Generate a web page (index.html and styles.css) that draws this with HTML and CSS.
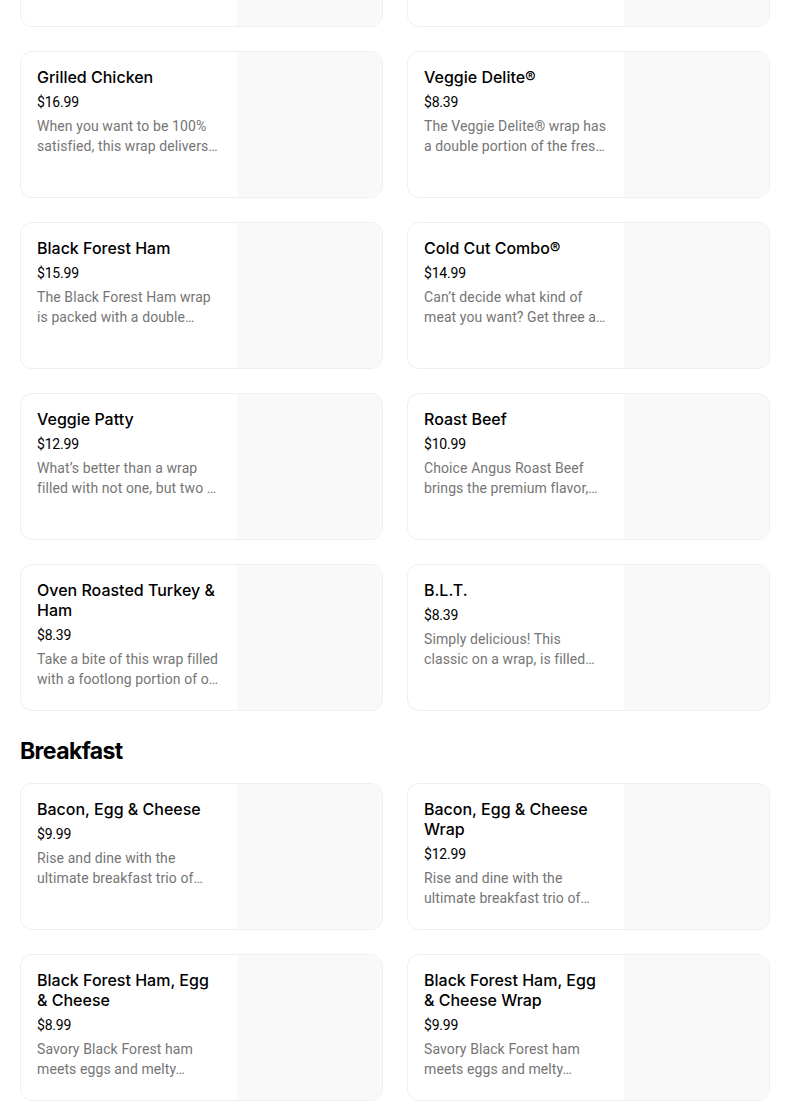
FILE: index.html
```html
<!DOCTYPE html>
<html lang="en">
<head>
<meta charset="utf-8">
<title>Menu</title>
<link rel="stylesheet" href="styles.css">
</head>
<body>
<main class="menu">
  <section class="section section-scrolled">
    <div class="grid">
      <div class="card"><div class="info"></div><div class="thumb"></div></div>
      <div class="card"><div class="info"></div><div class="thumb"></div></div>

      <div class="card">
        <div class="info">
          <h3 class="title">Grilled Chicken</h3>
          <div class="price">$16.99</div>
          <p class="desc"><span class="line">When you want to be 100%</span><span class="line cut">satisfied, this wrap delivers</span></p>
        </div>
        <div class="thumb"></div>
      </div>
      <div class="card">
        <div class="info">
          <h3 class="title">Veggie Delite®</h3>
          <div class="price">$8.39</div>
          <p class="desc"><span class="line">The Veggie Delite® wrap has</span><span class="line">a double portion of the freshest veggies.</span></p>
        </div>
        <div class="thumb"></div>
      </div>

      <div class="card">
        <div class="info">
          <h3 class="title">Black Forest Ham</h3>
          <div class="price">$15.99</div>
          <p class="desc"><span class="line">The Black Forest Ham wrap</span><span class="line cut">is packed with a double</span></p>
        </div>
        <div class="thumb"></div>
      </div>
      <div class="card">
        <div class="info">
          <h3 class="title">Cold Cut Combo®</h3>
          <div class="price">$14.99</div>
          <p class="desc"><span class="line">Can’t decide what kind of</span><span class="line">meat you want? Get three at once.</span></p>
        </div>
        <div class="thumb"></div>
      </div>

      <div class="card">
        <div class="info">
          <h3 class="title">Veggie Patty</h3>
          <div class="price">$12.99</div>
          <p class="desc"><span class="line">What’s better than a wrap</span><span class="line">filled with not one, but two veggie patties?</span></p>
        </div>
        <div class="thumb"></div>
      </div>
      <div class="card">
        <div class="info">
          <h3 class="title">Roast Beef</h3>
          <div class="price">$10.99</div>
          <p class="desc"><span class="line">Choice Angus Roast Beef</span><span class="line cut">brings the premium flavor,</span></p>
        </div>
        <div class="thumb"></div>
      </div>

      <div class="card">
        <div class="info">
          <h3 class="title">Oven Roasted Turkey &amp; Ham</h3>
          <div class="price">$8.39</div>
          <p class="desc"><span class="line">Take a bite of this wrap filled</span><span class="line">with a footlong portion of oven roasted turkey and ham.</span></p>
        </div>
        <div class="thumb"></div>
      </div>
      <div class="card">
        <div class="info">
          <h3 class="title">B.L.T.</h3>
          <div class="price">$8.39</div>
          <p class="desc"><span class="line">Simply delicious! This</span><span class="line cut">classic on a wrap, is filled</span></p>
        </div>
        <div class="thumb"></div>
      </div>
    </div>
  </section>

  <section class="section">
    <h2 class="section-title">Breakfast</h2>
    <div class="grid">
      <div class="card">
        <div class="info">
          <h3 class="title">Bacon, Egg &amp; Cheese</h3>
          <div class="price">$9.99</div>
          <p class="desc"><span class="line">Rise and dine with the</span><span class="line cut">ultimate breakfast trio of</span></p>
        </div>
        <div class="thumb"></div>
      </div>
      <div class="card">
        <div class="info">
          <h3 class="title">Bacon, Egg &amp; Cheese Wrap</h3>
          <div class="price">$12.99</div>
          <p class="desc"><span class="line">Rise and dine with the</span><span class="line cut">ultimate breakfast trio of</span></p>
        </div>
        <div class="thumb"></div>
      </div>

      <div class="card">
        <div class="info">
          <h3 class="title">Black Forest Ham, Egg &amp; Cheese</h3>
          <div class="price">$8.99</div>
          <p class="desc"><span class="line">Savory Black Forest ham</span><span class="line cut">meets eggs and melty</span></p>
        </div>
        <div class="thumb"></div>
      </div>
      <div class="card">
        <div class="info">
          <h3 class="title">Black Forest Ham, Egg &amp; Cheese Wrap</h3>
          <div class="price">$9.99</div>
          <p class="desc"><span class="line">Savory Black Forest ham</span><span class="line cut">meets eggs and melty</span></p>
        </div>
        <div class="thumb"></div>
      </div>
    </div>
  </section>
</main>
</body>
</html>
```
FILE: styles.css
```css
* { box-sizing: border-box; }

html, body {
  margin: 0;
  padding: 0;
  background: #ffffff;
}

body {
  font-family: Inter, "Noto Sans", "Liberation Sans", sans-serif;
  color: #000000;
  overflow: hidden;
}

.menu {
  padding: 0 34px 0 20px;
}

.section-scrolled {
  margin-top: -120px;
}

.section-title {
  margin: 24px 0 16px;
  font-size: 23px;
  line-height: 32px;
  font-weight: 700;
  letter-spacing: -0.6px;
}

.grid {
  display: grid;
  grid-template-columns: 363px 363px;
  column-gap: 24px;
  row-gap: 24px;
}

.card {
  display: flex;
  height: 147px;
  border: 1px solid #efefef;
  border-radius: 12px;
  overflow: hidden;
  background: #ffffff;
}

.info {
  width: 216px;
  flex: none;
  padding: 15px 16px 0 16px;
}

.thumb {
  flex: 1;
  background: #f9f9f9;
}

.title {
  margin: 0;
  font-size: 16px;
  line-height: 20px;
  font-weight: 500;
  color: #000000;
}

.price {
  margin-top: 5px;
  font-family: Roboto, "Liberation Sans", sans-serif;
  font-size: 14px;
  line-height: 20px;
  color: #000000;
  letter-spacing: -0.2px;
}

.desc {
  margin: 4px 0 0;
  font-family: Roboto, "Liberation Sans", sans-serif;
  font-size: 14px;
  line-height: 20px;
  color: #757575;
  letter-spacing: 0.1px;
}

.line {
  display: block;
  white-space: nowrap;
  overflow: hidden;
  text-overflow: ellipsis;
}

.line.cut::after {
  content: "\2026";
}
```
